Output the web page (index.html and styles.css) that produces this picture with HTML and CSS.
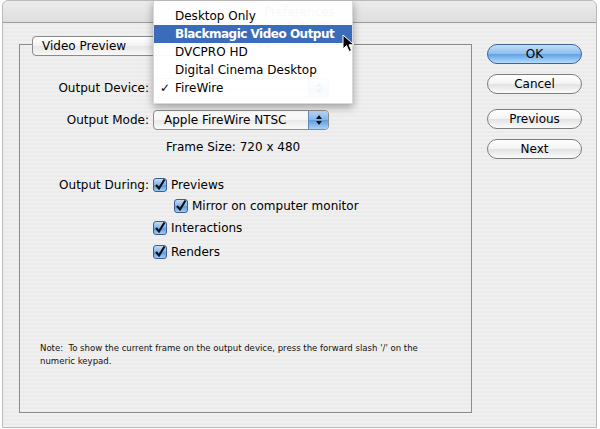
FILE: index.html
```html
<!DOCTYPE html>
<html lang="en">
<head>
    <meta charset="UTF-8">
    <title>Preferences</title>
    <link rel="stylesheet" href="styles.css">
</head>
<body>
    <div class="window">
        <div class="titlebar">Preferences</div>

        <div class="window-body">
            <div class="panel">
                <div class="panel-tab">Video Preview</div>

                <div class="field field-device">
                    <label>Output Device:</label>
                    <div class="popup">
                        <span></span>
                        <span class="popup-arrows"><i class="up"></i><i class="down"></i></span>
                    </div>
                </div>

                <div class="field field-mode">
                    <label>Output Mode:</label>
                    <div class="popup">
                        <span>Apple FireWire NTSC</span>
                        <span class="popup-arrows"><i class="up"></i><i class="down"></i></span>
                    </div>
                </div>

                <div class="field field-size">
                    <label></label>
                    <div class="frame-size">Frame Size: 720 x 480</div>
                </div>

                <div class="field field-during">
                    <label>Output During:</label>
                    <div class="checkbox">
                        <svg class="check" width="14" height="14" viewBox="0 0 14 14"><rect x="0.5" y="0.5" width="13" height="13" rx="2.5" fill="url(#cb)" stroke="#3b5f92"/><path d="M3 7 L6 10.5 L11.5 1.5" fill="none" stroke="#111" stroke-width="2.2"/></svg>
                        Previews
                    </div>
                </div>

                <div class="field field-sub">
                    <label></label>
                    <div class="checkbox indent">
                        <svg class="check" width="14" height="14" viewBox="0 0 14 14"><rect x="0.5" y="0.5" width="13" height="13" rx="2.5" fill="url(#cb)" stroke="#3b5f92"/><path d="M3 7 L6 10.5 L11.5 1.5" fill="none" stroke="#111" stroke-width="2.2"/></svg>
                        Mirror on computer monitor
                    </div>
                </div>

                <div class="field field-interactions">
                    <label></label>
                    <div class="checkbox">
                        <svg class="check" width="14" height="14" viewBox="0 0 14 14"><rect x="0.5" y="0.5" width="13" height="13" rx="2.5" fill="url(#cb)" stroke="#3b5f92"/><path d="M3 7 L6 10.5 L11.5 1.5" fill="none" stroke="#111" stroke-width="2.2"/></svg>
                        Interactions
                    </div>
                </div>

                <div class="field field-renders">
                    <label></label>
                    <div class="checkbox">
                        <svg class="check" width="14" height="14" viewBox="0 0 14 14"><rect x="0.5" y="0.5" width="13" height="13" rx="2.5" fill="url(#cb)" stroke="#3b5f92"/><path d="M3 7 L6 10.5 L11.5 1.5" fill="none" stroke="#111" stroke-width="2.2"/></svg>
                        Renders
                    </div>
                </div>

                <p class="note">Note:&nbsp; To show the current frame on the output device, press the forward slash '/' on the numeric keypad.</p>
            </div>

            <div class="buttons">
                <button class="btn btn-default">OK</button>
                <button class="btn">Cancel</button>
                <button class="btn btn-gap">Previous</button>
                <button class="btn">Next</button>
            </div>
        </div>

        <ul class="menu">
            <li>Desktop Only</li>
            <li class="selected">Blackmagic Video Output</li>
            <li>DVCPRO HD</li>
            <li>Digital Cinema Desktop</li>
            <li><span class="tick">&#10003;</span>FireWire</li>
        </ul>

        <svg class="cursor" width="14" height="20" viewBox="0 0 14 20">
            <path d="M1 1 L1 15 L4.5 11.5 L7 17.5 L9.5 16.5 L7 10.8 L12 10.8 Z" fill="#000" stroke="#fff" stroke-width="1"/>
        </svg>
    </div>

    <svg width="0" height="0" style="position:absolute">
        <defs>
            <linearGradient id="cb" x1="0" y1="0" x2="0" y2="1">
                <stop offset="0" stop-color="#c9e0f7"/>
                <stop offset="0.5" stop-color="#7fb2e8"/>
                <stop offset="0.55" stop-color="#5b9be0"/>
                <stop offset="1" stop-color="#a9d3fb"/>
            </linearGradient>
        </defs>
    </svg>
</body>
</html>
```

FILE: styles.css
```css
* {
    margin: 0;
    padding: 0;
    box-sizing: border-box;
}

body {
    background: #fff;
    font-family: 'DejaVu Sans', sans-serif;
    font-size: 12px;
    color: #000;
}

.window {
    position: relative;
    margin-left: 2px;
    width: 595px;
    height: 428px;
    border: 1px solid #b9b9b9;
    border-radius: 6px 6px 0 0;
    background: repeating-linear-gradient(#f0f0f0 0, #f0f0f0 2px, #ebebeb 2px, #ebebeb 4px);
    overflow: hidden;
}

.titlebar {
    height: 22px;
    border-bottom: 1px solid #9c9c9c;
    background: linear-gradient(#ececec, #dedede);
    text-align: center;
    line-height: 22px;
    color: #6a6a6a;
    border-radius: 6px 6px 0 0;
}

.window-body {
    display: flex;
    padding: 21px 0 0 16px;
}

.panel {
    position: relative;
    width: 453px;
    height: 369px;
    border: 1px solid #8f8a8b;
    padding-top: 33px;
}

.panel-tab {
    position: absolute;
    left: 12px;
    top: -9px;
    width: 170px;
    height: 20px;
    padding-left: 9px;
    line-height: 18px;
    border: 1px solid #8a8a8a;
    border-radius: 4px;
    background: linear-gradient(#ffffff, #f2f2f2 50%, #e6e6e6 51%, #f8f8f8);
}

.field {
    display: grid;
    grid-template-columns: 129px 176px;
    column-gap: 4px;
    align-items: center;
}

.field label {
    text-align: right;
}

.field-mode {
    margin-top: 12px;
}

.field-size {
    margin-top: 9px;
    height: 16px;
}

.field-during {
    margin-top: 21px;
    height: 18px;
}

.field-sub {
    margin-top: 3px;
    height: 18px;
    grid-template-columns: 129px 260px;
}

.field-interactions {
    margin-top: 4px;
    height: 18px;
}

.field-renders {
    margin-top: 6px;
    height: 18px;
}

.popup {
    display: flex;
    justify-content: space-between;
    align-items: center;
    height: 20px;
    padding-left: 10px;
    border: 1px solid #8c8c8c;
    border-radius: 4px;
    background: linear-gradient(#ffffff, #f4f4f4 50%, #e8e8e8 51%, #fafafa);
    overflow: hidden;
}

.popup-arrows {
    display: flex;
    flex-direction: column;
    align-items: center;
    justify-content: center;
    gap: 2px;
    width: 20px;
    height: 100%;
    background: linear-gradient(#bcd9f6, #80b4ea 50%, #5e9de0 51%, #a7d1f8);
    border-left: 1px solid #6187b8;
}

.popup-arrows i {
    width: 0;
    height: 0;
    border-left: 3px solid transparent;
    border-right: 3px solid transparent;
}

.popup-arrows .up {
    border-bottom: 4px solid #111;
}

.popup-arrows .down {
    border-top: 4px solid #111;
}

.frame-size {
    padding-left: 13px;
}

.checkbox {
    display: flex;
    align-items: center;
    gap: 4px;
    white-space: nowrap;
}

.check {
    flex-shrink: 0;
}

.checkbox.indent {
    padding-left: 21px;
}

.note {
    margin: 80px 0 0 20px;
    width: 392px;
    font-family: 'DejaVu Sans Condensed', 'DejaVu Sans', sans-serif;
    font-size: 9.5px;
    line-height: 13px;
    color: #111;
}

.buttons {
    display: flex;
    flex-direction: column;
    margin-left: 15px;
    gap: 10px;
}

.btn {
    width: 95px;
    height: 20px;
    border: 1px solid #7d7d7d;
    border-radius: 10px;
    background: linear-gradient(#ffffff, #f3f3f3 50%, #e2e2e2 51%, #fbfbfb);
    font-family: 'DejaVu Sans', sans-serif;
    font-size: 12px;
    color: #000;
}

.btn-default {
    border-color: #3e6697;
    background: linear-gradient(#c4def7, #8dbdf0 50%, #5fa0e4 51%, #b5dcfd);
}

.btn-gap {
    margin-top: 5px;
}

.menu {
    position: absolute;
    left: 150px;
    top: -1px;
    width: 200px;
    padding: 7px 0 6px;
    list-style: none;
    background: rgba(255, 255, 255, 0.95);
    box-shadow: 0 3px 8px rgba(0, 0, 0, 0.35);
    border: 1px solid rgba(0, 0, 0, 0.15);
    border-top: none;
}

.menu li {
    height: 18px;
    line-height: 18px;
    padding-left: 21px;
    position: relative;
}

.menu li.selected {
    background: #3a6cbb;
    color: #fff;
    font-weight: bold;
    letter-spacing: -0.5px;
}

.menu .tick {
    position: absolute;
    left: 6px;
}

.cursor {
    position: absolute;
    left: 339px;
    top: 33px;
}
```
